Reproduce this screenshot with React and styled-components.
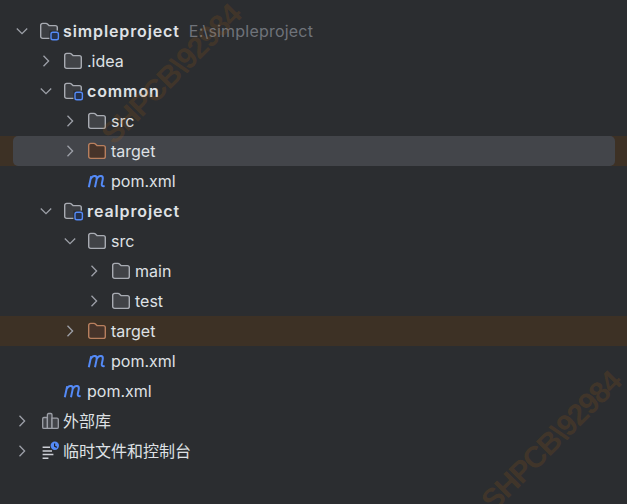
import React from "react";
import styled, { createGlobalStyle } from "styled-components";

const GlobalStyle = createGlobalStyle`
  html, body {
    margin: 0;
    padding: 0;
    background: #2b2d30;
  }
`;

const Page = styled.div`
  position: relative;
  width: 627px;
  height: 504px;
  overflow: hidden;
  background: #2b2d30;
  font-family: Inter, "Noto Sans CJK SC", sans-serif;
  font-size: 16px;
  color: #dfe1e5;
`;

const Tree = styled.div`
  display: flex;
  flex-direction: column;
  padding-top: 16px;
`;

const Row = styled.div`
  height: 30px;
  background: ${(p) => (p.$excluded ? "#3d3125" : "transparent")};
`;

const RowInner = styled.div`
  height: 100%;
  margin: 0 12px 0 13px;
  padding-left: ${(p) => 1 + p.$depth * 24}px;
  display: flex;
  align-items: center;
  border-radius: 5px;
  background: ${(p) => (p.$selected ? "#43454a" : "transparent")};
`;

const ChevronSlot = styled.span`
  flex: none;
  width: 16px;
  height: 16px;
  margin-right: 10px;
  display: flex;
`;

const IconSlot = styled.span`
  flex: none;
  width: 18px;
  height: 18px;
  margin-right: 5px;
  display: flex;
  svg {
    overflow: visible;
  }
`;

const Name = styled.span`
  white-space: nowrap;
  letter-spacing: ${(p) => (p.$bold ? "0.88px" : "0")};
  font-weight: ${(p) => (p.$bold ? 600 : 400)};
`;

const CjkName = styled.span`
  white-space: nowrap;
  margin-bottom: 2px;
  font-family: "Noto Sans CJK SC", sans-serif;
  font-size: 16px;
  color: #dfe1e5;
`;

const PathHint = styled.span`
  margin-left: 9px;
  white-space: nowrap;
  color: #6f737a;
  letter-spacing: 0.2px;
`;

const Watermark = styled.div`
  position: absolute;
  left: ${(p) => p.$x}px;
  top: ${(p) => p.$y}px;
  transform-origin: left bottom;
  transform: rotate(-45deg);
  white-space: nowrap;
  font-family: "Liberation Sans", sans-serif;
  font-weight: 700;
  font-size: 30px;
  line-height: 32px;
  letter-spacing: -1.3px;
  color: rgba(160, 90, 20, 0.2);
  pointer-events: none;
`;

const Chevron = ({ open }) => (
  <ChevronSlot>
    <svg width="16" height="16" viewBox="0 0 16 16" fill="none" stroke="#9da0a8" strokeWidth="1.3">
      {open ? <path d="M2.8 5.5L8 10.6L13.2 5.5" /> : <path d="M5.5 2.8L10.6 8L5.5 13.2" />}
    </svg>
  </ChevronSlot>
);

const FOLDER = "M0.7 3.4C0.7 2.2 1.5 1.4 2.7 1.4H6C6.6 1.4 7 1.6 7.4 2L9 3.6H15.3C16.5 3.6 17.3 4.4 17.3 5.6V14.4C17.3 15.6 16.5 16.4 15.3 16.4H2.7C1.5 16.4 0.7 15.6 0.7 14.4Z";

const FolderIcon = ({ stroke = "#a8abb2", fill = "#414347" }) => (
  <svg width="18" height="18" viewBox="0 0 18 18" fill={fill} stroke={stroke} strokeWidth="1.4">
    <path d={FOLDER} />
  </svg>
);

const ModuleIcon = () => (
  <svg width="18" height="18" viewBox="0 0 18 18" fill="none">
    <path d={FOLDER} fill="#3c3e42" stroke="#a8abb2" strokeWidth="1.4" />
    <rect x="9.4" y="8.6" width="10" height="10.4" fill="#2b2d30" />
    <rect x="11" y="10.2" width="7.4" height="7.6" rx="1.8" fill="#25324d" stroke="#548af7" strokeWidth="1.4" />
  </svg>
);

const MavenIcon = () => (
  <svg width="18" height="18" viewBox="0 0 18 18" fill="none" stroke="#548af7" strokeWidth="2">
    <path d="M0.8 15.2L3.2 4.2M2.8 6.8C4 4.6 5.8 3.7 7.2 4C8.8 4.4 9 5.8 8.6 7.6L7 15.2M8.8 6.8C10 4.6 11.9 3.7 13.3 4C14.9 4.4 15.1 5.8 14.7 7.6L13.8 11.8C13.4 13.6 14.2 14.5 16.6 14" />
  </svg>
);

const LibraryIcon = () => (
  <svg width="18" height="18" viewBox="0 0 18 18" fill="#43454a" stroke="#9da0a8" strokeWidth="1.3">
    <path d="M2.7 6.8C2.7 6 3.2 5.5 3.9 5.5H7.4V16.4H3.9C3.2 16.4 2.7 15.9 2.7 15.2Z" />
    <path d="M7.4 2.7C7.4 2 7.9 1.5 8.6 1.5H10.8C11.5 1.5 12 2 12 2.7V16.4H7.4Z" />
    <path d="M12 6.2H17C17.8 6.2 18.3 6.7 18.3 7.4V15.2C18.3 15.9 17.8 16.4 17 16.4H12Z" />
  </svg>
);

const ScratchIcon = () => (
  <svg width="18" height="18" viewBox="0 0 18 18" fill="none">
    <path d="M2.6 5.2H10M2.6 8.9H12M2.6 12.6H13.4M2.6 16.2H8.4" stroke="#ced0d6" strokeWidth="1.5" />
    <circle cx="14.8" cy="3.8" r="4.2" fill="#548af7" />
    <path d="M14.6 1.4V4.2L16.8 5.4" stroke="#1e1f22" strokeWidth="1.2" />
  </svg>
);

const icons = {
  folder: <FolderIcon />,
  module: <ModuleIcon />,
  target: <FolderIcon stroke="#b87f5e" fill="#47342a" />,
  maven: <MavenIcon />,
  library: <LibraryIcon />,
  scratch: <ScratchIcon />,
};

const rows = [
  { depth: 0, chevron: "open", icon: "module", name: "simpleproject", bold: true, hint: "E:\\simpleproject" },
  { depth: 1, chevron: "closed", icon: "folder", name: ".idea" },
  { depth: 1, chevron: "open", icon: "module", name: "common", bold: true },
  { depth: 2, chevron: "closed", icon: "folder", name: "src" },
  { depth: 2, chevron: "closed", icon: "target", name: "target", excluded: true, selected: true },
  { depth: 2, icon: "maven", name: "pom.xml" },
  { depth: 1, chevron: "open", icon: "module", name: "realproject", bold: true },
  { depth: 2, chevron: "open", icon: "folder", name: "src" },
  { depth: 3, chevron: "closed", icon: "folder", name: "main" },
  { depth: 3, chevron: "closed", icon: "folder", name: "test" },
  { depth: 2, chevron: "closed", icon: "target", name: "target", excluded: true },
  { depth: 2, icon: "maven", name: "pom.xml" },
  { depth: 1, icon: "maven", name: "pom.xml" },
  { depth: 0, chevron: "closed", icon: "library", name: "外部库", cjk: true },
  { depth: 0, chevron: "closed", icon: "scratch", name: "临时文件和控制台", cjk: true },
];

export default function App() {
  return (
    <Page>
      <GlobalStyle />
      <Tree>
        {rows.map((row, i) => (
          <Row key={i} $excluded={row.excluded}>
            <RowInner $depth={row.depth} $selected={row.selected}>
              {row.chevron ? <Chevron open={row.chevron === "open"} /> : <ChevronSlot />}
              <IconSlot>{icons[row.icon]}</IconSlot>
              {row.cjk ? <CjkName>{row.name}</CjkName> : <Name $bold={row.bold}>{row.name}</Name>}
              {row.hint && <PathHint>{row.hint}</PathHint>}
            </RowInner>
          </Row>
        ))}
      </Tree>
      <Watermark $x={118} $y={118}>SHPCB\92984</Watermark>
      <Watermark $x={498} $y={485}>SHPCB\92984</Watermark>
    </Page>
  );
}
